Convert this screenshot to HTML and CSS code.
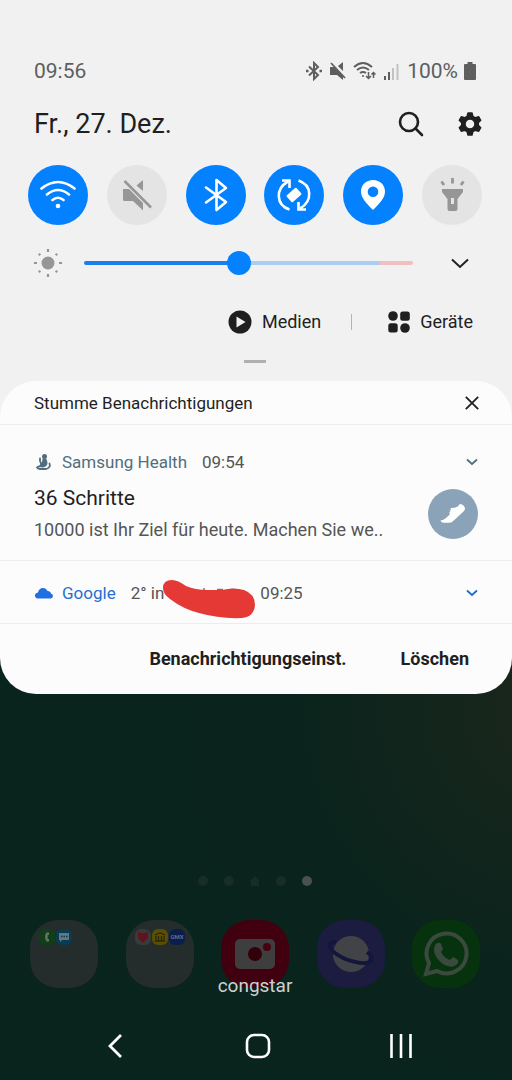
FILE: index.html
```html
<!DOCTYPE html>
<html lang="de">
<head>
    <meta charset="UTF-8">
    <meta name="viewport" content="width=device-width, initial-scale=1.0">
    <title>Benachrichtigungen</title>
    <link rel="stylesheet" href="styles.css">
</head>
<body>
    <header class="quick-panel">
        <div class="status-bar">
            <span>09:56</span>
            <div class="status-icons">
                <svg width="18" height="20" viewBox="0 0 18 20" fill="none" stroke="#5e5e5e" stroke-width="2"><path d="M4 5.500l9 8.500-4 4V2l4 4-9 8.500"/><path d="M1 10h2.500M14.500 10H17" stroke-width="2.500"/></svg>
                <svg width="18" height="20" viewBox="0 0 18 20"><path d="M1 6h4l9 9v4l-6-5H1zM9 5l5-4v9z" fill="#5e5e5e"/><path d="M2 2l14 15" stroke="#5e5e5e" stroke-width="1.800"/></svg>
                <svg width="24" height="20" viewBox="0 0 24 20" fill="none" stroke="#5e5e5e" stroke-width="2"><path d="M1 6q9-8 18 0M4 9q6-5 12 0M7 12q3-2 6 0"/><circle cx="10" cy="15" r="1" fill="#5e5e5e" stroke="none"/><path d="M15.500 11v6M13 15l2.500 2.500L18 15M20.500 17v-5M18.500 13.500l2-2 2 2" stroke-width="1.500"/></svg>
                <svg width="16" height="18" viewBox="0 0 16 18"><path d="M1 14h2v4H1zM5 10h2v8H5z" fill="#5e5e5e"/><path d="M9 6h2v12H9zM13.500 2h2v16h-2z" fill="#c2c2c2"/></svg>
                <span class="percent">100%</span>
                <svg width="12" height="18" viewBox="0 0 12 18"><path d="M3.500 0h5v2H11q1 0 1 1v14q0 1-1 1H1q-1 0-1-1V3q0-1 1-1h2.500z" fill="#5e5e5e"/></svg>
            </div>
        </div>

        <div class="date-row">
            <h1>Fr., 27. Dez.</h1>
            <div class="date-actions">
                <button aria-label="Suchen">
                    <svg width="26" height="26" viewBox="0 0 26 26" fill="none" stroke="#1f1f1f" stroke-width="2.600" stroke-linecap="round"><circle cx="11" cy="11" r="9"/><path d="M17.500 17.500l6.500 6.500"/></svg>
                </button>
                <button aria-label="Einstellungen">
                    <svg width="24" height="24" viewBox="0 0 24 24"><path fill="#1f1f1f" stroke="#1f1f1f" stroke-width="1.500" stroke-linejoin="round" fill-rule="evenodd" d="M10 1h4l.8 3.300 2.700 1.500 3.200-1 2 3.500-2.400 2.300v2.800l2.400 2.300-2 3.500-3.200-1-2.700 1.500L14 23h-4l-.8-3.300-2.700-1.500-3.200 1-2-3.500 2.400-2.300v-2.800L1.300 8.300l2-3.500 3.200 1 2.700-1.500zM12 7a5 5 0 1 0 0 10 5 5 0 0 0 0-10z"/></svg>
                </button>
            </div>
        </div>

        <div class="tiles">
            <button class="tile on" aria-label="WLAN">
                <svg width="36" height="36" viewBox="0 0 36 36" fill="none" stroke="#fff" stroke-width="2.600" stroke-linecap="round"><path d="M1.500 11.500q16.500-13 33 0M7 17.500q11-9 22 0M12.500 23q5.500-4.500 11 0"/><circle cx="18" cy="29" r="2.300" fill="#fff" stroke="none"/></svg>
            </button>
            <button class="tile" aria-label="Stumm">
                <svg width="36" height="36" viewBox="0 0 36 36"><path d="M17.500 8.500L24 3v11z" fill="#969696"/><path d="M4 12h6l14 14v7.500L14 24H5.500Q4 24 4 22.500z" fill="#969696"/><path d="M5.500 4L32 30.500" stroke="#969696" stroke-width="2.500"/></svg>
            </button>
            <button class="tile on" aria-label="Bluetooth">
                <svg width="36" height="36" viewBox="0 0 36 36" fill="none" stroke="#fff" stroke-width="2.600" stroke-linecap="round" stroke-linejoin="round"><path d="M8 10.500l20 14.500-9.500 8V3l9.500 8L8 25.500"/></svg>
            </button>
            <button class="tile on" aria-label="Automatisch drehen">
                <svg width="36" height="36" viewBox="0 0 36 36" fill="none" stroke="#fff" stroke-width="2.600"><path d="M13.500 32.500C0 28-1 12 12 4.500M22.500 3.500C36 8 37 24 24 31.500"/><path d="M6 3.500h7.500V11M30 32.500h-7.500V25"/><rect x="11.500" y="13.500" width="13" height="9" rx="1" fill="#fff" stroke="none" transform="rotate(-42 18 18)"/></svg>
            </button>
            <button class="tile on" aria-label="Standort">
                <svg width="36" height="36" viewBox="0 0 36 36"><path fill="#fff" fill-rule="evenodd" d="M18 3C11 3 6 8 6 14.500 6 21 11 26 18 33c7-7 12-12 12-18.500C30 8 25 3 18 3zm0 6.500a5.300 5.300 0 1 1 0 10.600 5.300 5.300 0 0 1 0-10.600z"/></svg>
            </button>
            <button class="tile" aria-label="Taschenlampe">
                <svg width="36" height="36" viewBox="0 0 36 36"><path fill="#969696" fill-rule="evenodd" d="M8 12h21v3l-5.500 7v10q0 2-2 2h-6q-2 0-2-2V22L8 15zm9 9v6h3v-6z"/><path d="M18.500 1v5.500M7.500 4.500l2.500 3.500M29.500 4.500L27 8" stroke="#969696" stroke-width="2.800"/></svg>
            </button>
        </div>

        <div class="brightness">
            <svg width="28" height="28" viewBox="0 0 28 28"><circle cx="14" cy="14" r="6.500" fill="#969696"/><path d="M14 0v3M14 25v3M0 14h3M25 14h3M4.800 4.800l1.500 1.500M21.700 21.700l1.500 1.500M4.800 23.200l1.500-1.500M21.700 6.300l1.500-1.500" stroke="#969696" stroke-width="2.200"/></svg>
            <input type="range" min="0" max="100" value="47" aria-label="Helligkeit">
            <button aria-label="Mehr anzeigen">
                <svg width="18" height="11" viewBox="0 0 18 11" fill="none" stroke="#1f1f1f" stroke-width="2"><path d="M1 1.500l8 7.500 8-7.500"/></svg>
            </button>
        </div>

        <div class="shortcuts">
            <button>
                <svg width="24" height="24" viewBox="0 0 24 24"><circle cx="12" cy="12" r="11.500" fill="#1f1f1f"/><path d="M8.500 6.500v11l9-5.500z" fill="#f1f1f1"/></svg>
                Medien
            </button>
            <span class="divider"></span>
            <button>
                <svg width="22" height="22" viewBox="0 0 22 22" fill="#1f1f1f"><circle cx="5" cy="5" r="4.800"/><rect x="12.200" y=".4" width="9.600" height="9.400" rx="2.500"/><rect x=".3" y="12.200" width="9.400" height="9.400" rx="2.500"/><circle cx="17" cy="17" r="4.800"/></svg>
                Geräte
            </button>
        </div>

        <div class="handle"></div>
    </header>

    <main class="notifications">
        <section class="card">
            <div class="card-header">
                <h2>Stumme Benachrichtigungen</h2>
                <button aria-label="Schließen">
                    <svg width="14" height="14" viewBox="0 0 14 14" stroke="#1f1f1f" stroke-width="1.800"><path d="M.8.8l12.400 12.400M13.200.8L.8 13.200"/></svg>
                </button>
            </div>

            <article class="notification health">
                <div class="meta">
                    <svg width="20" height="18" viewBox="0 0 20 18"><circle cx="10.500" cy="3.500" r="2.500" fill="#526e7c"/><path fill="#526e7c" d="M8.500 5.500h3.500q1.500 2 1.500 5.500-1 3-4 3.500-3 0-4-1 0-1.500 1-3 2-1 2-5z"/><path d="M6 5.500q-.500 3 1 5M15.500 10.500q1.500 4-3.500 5.500H6q-2.500 0-3-1.500 1-1 4-1.500" fill="none" stroke="#526e7c" stroke-width="1.800" stroke-linecap="round"/></svg>
                    <span class="app">Samsung Health</span>
                    <time>09:54</time>
                    <button aria-label="Erweitern"><svg width="12" height="8" viewBox="0 0 12 8" fill="none" stroke="#526e7c" stroke-width="1.800"><path d="M1 1.500l5 4.500 5-4.500"/></svg></button>
                </div>
                <div class="content">
                    <div class="text">
                        <h3>36 Schritte</h3>
                        <p>10000 ist Ihr Ziel für heute. Machen Sie we..</p>
                    </div>
                    <div class="badge">
                        <svg width="26" height="20" viewBox="0 0 26 20"><path fill="#fff" d="M.5 16.500q3-.5 5.500-2.500 2.500-2 4-4L9 8.500l1.500-.5-1-1.500 1.500-.5-.5-2q5 .5 8-2l.5-1.500 2-.5q3 1 4 4 0 2-1 3l-8 7.500-4 3.500q-1 .8-3 .8H4q-3 0-3.500-2.300z"/></svg>
                    </div>
                </div>
            </article>

            <article class="notification google">
                <div class="meta">
                    <svg width="20" height="12" viewBox="0 0 20 12"><path fill="#1f6fe0" d="M4 11.500Q1 11.500 1 8.500 1 6 4 5.500 5 1 9 1q3 0 4.500 3 3 0 3.500 2.500 2 .5 2 2.500t-2.500 2.500z"/></svg>
                    <span class="app">Google</span>
                    <span>2° in</span>
                    <span class="scribble">
                        <svg width="96" height="42" viewBox="0 0 96 42"><path d="M8 19h2M42 11v3M55 12.500h6M68 12.500h4" stroke="#777" stroke-width="1.500"/><path fill="#e53935" d="M1 11Q1 3 10 3q6 0 14 6 9 4 22 4h14q12-3 22 0 11 4 11 15-1 12-13 13-22 1-43-5-16-4-29-14-7-5-7-11z"/></svg>
                    </span>
                    <time>09:25</time>
                    <button aria-label="Erweitern"><svg width="12" height="8" viewBox="0 0 12 8" fill="none" stroke="#1c6fc9" stroke-width="1.800"><path d="M1 1.500l5 4.500 5-4.500"/></svg></button>
                </div>
            </article>

            <div class="card-actions">
                <button>Benachrichtigungseinst.</button>
                <button>Löschen</button>
            </div>
        </section>
    </main>

    <section class="home">
        <div class="pages">
            <i></i><i></i>
            <svg width="10" height="10" viewBox="0 0 10 10"><path d="M5 0l5 5H9v5H1V5H0z" fill="#192d28"/></svg>
            <i></i><i class="current"></i>
        </div>
        <div class="dock">
            <div class="icon folder">
                <svg width="16" height="16" viewBox="0 0 16 16"><rect width="16" height="16" rx="6" fill="#103f17"/><path d="M10 3.500H7.500q-1.500 2-1.500 4.500t1.500 4.500H10V10H8.700V6H10z" fill="#65716a"/></svg>
                <svg width="16" height="16" viewBox="0 0 16 16"><rect width="16" height="16" rx="6" fill="#063c56"/><path d="M3 4h10v7H6l-2 2v-2H3z" fill="#68777c"/><path d="M5 7.500h1.500M7.500 7.500H9M10 7.500h1.500" stroke="#063c56" stroke-width="1.500"/></svg>
            </div>
            <div class="icon folder">
                <svg width="16" height="16" viewBox="0 0 16 16"><rect width="16" height="16" rx="6" fill="#373b3c"/><path d="M3 2l2.500 2h5L13 2v7l-5 5-5-5z" fill="#65121d"/><path d="M5 6l2 2M11 6L9 8M5 9l3 3 3-3" stroke="#4a1a20" fill="none"/></svg>
                <svg width="16" height="16" viewBox="0 0 16 16"><rect width="16" height="16" rx="6" fill="#5a4f00"/><path d="M3 6l5-2 5 2M4 7v5M6.500 7v5M9.500 7v5M12 7v5M3 12h10" fill="none" stroke="#302707" stroke-width="1.300"/></svg>
                <svg width="16" height="16" viewBox="0 0 16 16"><rect width="16" height="16" rx="6" fill="#0b1d4b"/><text x="8" y="10" class="gmx">GMX</text></svg>
            </div>
            <div class="icon camera">
                <svg width="40" height="30" viewBox="0 0 40 30"><rect width="40" height="30" rx="5" fill="#3f3e3e"/><circle cx="20" cy="15" r="7" fill="#310009"/><circle cx="32" cy="8" r="4" fill="#46000f"/></svg>
            </div>
            <div class="icon browser">
                <svg width="46" height="38" viewBox="0 0 46 38"><circle cx="23" cy="19" r="18" fill="#424347"/><path d="M8 7C0 7 0 12 7 18c10 8 31 13 36 8 2-3 0-6-4-9" fill="none" stroke="#14163c" stroke-width="4"/></svg>
            </div>
            <div class="icon phone">
                <svg width="46" height="46" viewBox="0 0 46 46"><path d="M3 43l3-11A20 20 0 1 1 14 40z" fill="none" stroke="#3c493e" stroke-width="4"/><path d="M14 12q3-1 4 1l2 5-2 3q3 6 9 8l3-3 5 3q1 3-2 5-5 4-13-1-8-6-9-13 0-6 3-8z" fill="#3c493e"/></svg>
            </div>
            <span class="carrier">congstar</span>
        </div>
    </section>

    <nav class="nav-bar">
        <button aria-label="Zurück"><svg width="16" height="26" viewBox="0 0 16 26" fill="none" stroke="#fff" stroke-width="2.800"><path d="M14 2L3 13l11 11"/></svg></button>
        <button aria-label="Startseite"><svg width="26" height="26" viewBox="0 0 26 26" fill="none" stroke="#fff" stroke-width="2.600"><rect x="2" y="2" width="22" height="22" rx="7"/></svg></button>
        <button aria-label="Letzte Apps"><svg width="24" height="24" viewBox="0 0 24 24" stroke="#fff" stroke-width="2.600"><path d="M2.500 0v24M12 0v24M21.500 0v24"/></svg></button>
    </nav>
</body>
</html>
```

FILE: styles.css
```css
* {
    margin: 0;
    padding: 0;
    box-sizing: border-box;
}

body {
    font-family: Roboto, sans-serif;
    display: flex;
    flex-direction: column;
    min-height: 100vh;
    color: #1f1f1f;
    background: radial-gradient(circle at 108% 66%, #1b261b 0, #0a241d 260px, #09241e 100%);
}

button {
    display: flex;
    align-items: center;
    justify-content: center;
    background: none;
    border: none;
    color: inherit;
    font: inherit;
    cursor: pointer;
}

svg {
    display: block;
    flex-shrink: 0;
}

h1, h2, h3 {
    font-weight: 400;
}

/* Quick panel */
.quick-panel {
    background: #f1f1f1;
    padding: 59px 30px 18px 28px;
}

.status-bar {
    display: flex;
    justify-content: space-between;
    align-items: center;
    padding: 0 6px;
    font-size: 21px;
    line-height: 24px;
    color: #5e5e5e;
}

.status-icons {
    display: flex;
    align-items: center;
    gap: 6px;
}

.percent {
    margin-left: 2px;
}

.date-row {
    display: flex;
    justify-content: space-between;
    align-items: center;
    padding-left: 6px;
    margin-top: 23px;
}

.date-row h1 {
    font-size: 27px;
    line-height: 36px;
}

.date-actions {
    display: flex;
    gap: 34px;
}

.tiles {
    display: flex;
    justify-content: space-between;
    margin-top: 23px;
}

.tile {
    width: 60px;
    height: 60px;
    border-radius: 50%;
    background: #e4e4e4;
}

.tile.on {
    background: #0381fe;
}

.brightness {
    display: flex;
    align-items: center;
    margin-top: 24px;
    padding: 0 13px 0 6px;
}

.brightness input {
    flex: 1;
    min-width: 0;
    height: 24px;
    margin: 0 38px 0 22px;
    appearance: none;
    background: none;
}

.brightness input::-webkit-slider-runnable-track {
    height: 4px;
    border-radius: 2px;
    background: linear-gradient(to right, #1780ea 47%, #abcdf1 47%, #abcdf1 90%, #f2bfc1 90%);
}

.brightness input::-webkit-slider-thumb {
    appearance: none;
    width: 24px;
    height: 24px;
    margin-top: -10px;
    border-radius: 50%;
    background: #0381fe;
}

.shortcuts {
    display: flex;
    justify-content: flex-end;
    align-items: center;
    gap: 30px;
    margin-top: 33px;
    padding-right: 9px;
    font-size: 18px;
    line-height: 24px;
}

.shortcuts button {
    gap: 10px;
}

.divider {
    width: 1px;
    height: 16px;
    margin-right: 6px;
    background: #b4b4b4;
}

.handle {
    width: 22px;
    height: 3px;
    margin: 26px auto 0;
    background: #b0b0b0;
}

/* Notifications */
.notifications {
    background: linear-gradient(#f1f1f1 60px, transparent 60px);
}

.card {
    border-radius: 36px;
    background: #fcfcfc;
}

.card-header {
    display: flex;
    justify-content: space-between;
    align-items: center;
    height: 44px;
    padding: 0 33px 0 34px;
    border-bottom: 1px solid #ececec;
}

.card-header h2 {
    font-size: 17px;
}

.notification {
    padding: 0 34px;
    border-bottom: 1px solid #ececec;
}

.health {
    padding-top: 25px;
    padding-bottom: 18px;
}

.google {
    padding-top: 20px;
    padding-bottom: 18px;
}

.meta {
    display: flex;
    align-items: center;
    font-size: 17px;
    line-height: 24px;
    color: #555;
}

.meta .app {
    margin: 0 15px 0 8px;
}

.meta button {
    margin-left: auto;
}

.health .app {
    color: #526e7c;
}

.google .app {
    color: #2370d2;
}

.scribble {
    position: relative;
    width: 96px;
    height: 24px;
}

.scribble svg {
    position: absolute;
    top: -4px;
    left: -2px;
}

.content {
    display: flex;
    justify-content: space-between;
    align-items: center;
    margin-top: 12px;
}

.text h3 {
    font-size: 21px;
    line-height: 24px;
}

.text p {
    margin-top: 8px;
    font-size: 18px;
    line-height: 24px;
    color: #555;
}

.badge {
    display: flex;
    align-items: center;
    justify-content: center;
    width: 50px;
    height: 50px;
    border-radius: 50%;
    background: #8ba3b8;
}

.card-actions {
    display: flex;
    justify-content: flex-end;
    gap: 54px;
    padding: 23px 43px;
}

.card-actions button {
    font-size: 18px;
    font-weight: 700;
    line-height: 24px;
}

/* Home screen behind the shade */
.home {
    flex: 1;
    display: flex;
    flex-direction: column;
    justify-content: flex-end;
    padding: 24px 32px 24px 30px;
}

.pages {
    display: flex;
    justify-content: center;
    gap: 16px;
    margin-bottom: 34px;
}

.pages i {
    width: 10px;
    height: 10px;
    border-radius: 50%;
    background: #192d28;
}

.pages .current {
    background: #4a5250;
}

.dock {
    position: relative;
    display: flex;
    justify-content: space-between;
}

.icon {
    display: flex;
    align-items: center;
    justify-content: center;
    width: 68px;
    height: 68px;
    border-radius: 28px;
}

.folder {
    align-items: flex-start;
    justify-content: flex-start;
    gap: 1px;
    padding: 9px;
    background: #242d2c;
}

.camera {
    background: #41000f;
}

.browser {
    background: #1b1c40;
}

.phone {
    background: #06330d;
}

.gmx {
    font-size: 6px;
    font-weight: 700;
    text-anchor: middle;
    fill: #626c87;
}

.carrier {
    position: absolute;
    left: 0;
    right: 0;
    bottom: -10px;
    text-align: center;
    font-size: 19px;
    line-height: 24px;
    color: #ccd2d0;
}

.nav-bar {
    display: flex;
    justify-content: space-between;
    align-items: center;
    height: 68px;
    padding: 0 98px 0 102px;
}

.nav-bar button {
    width: 26px;
}
```
